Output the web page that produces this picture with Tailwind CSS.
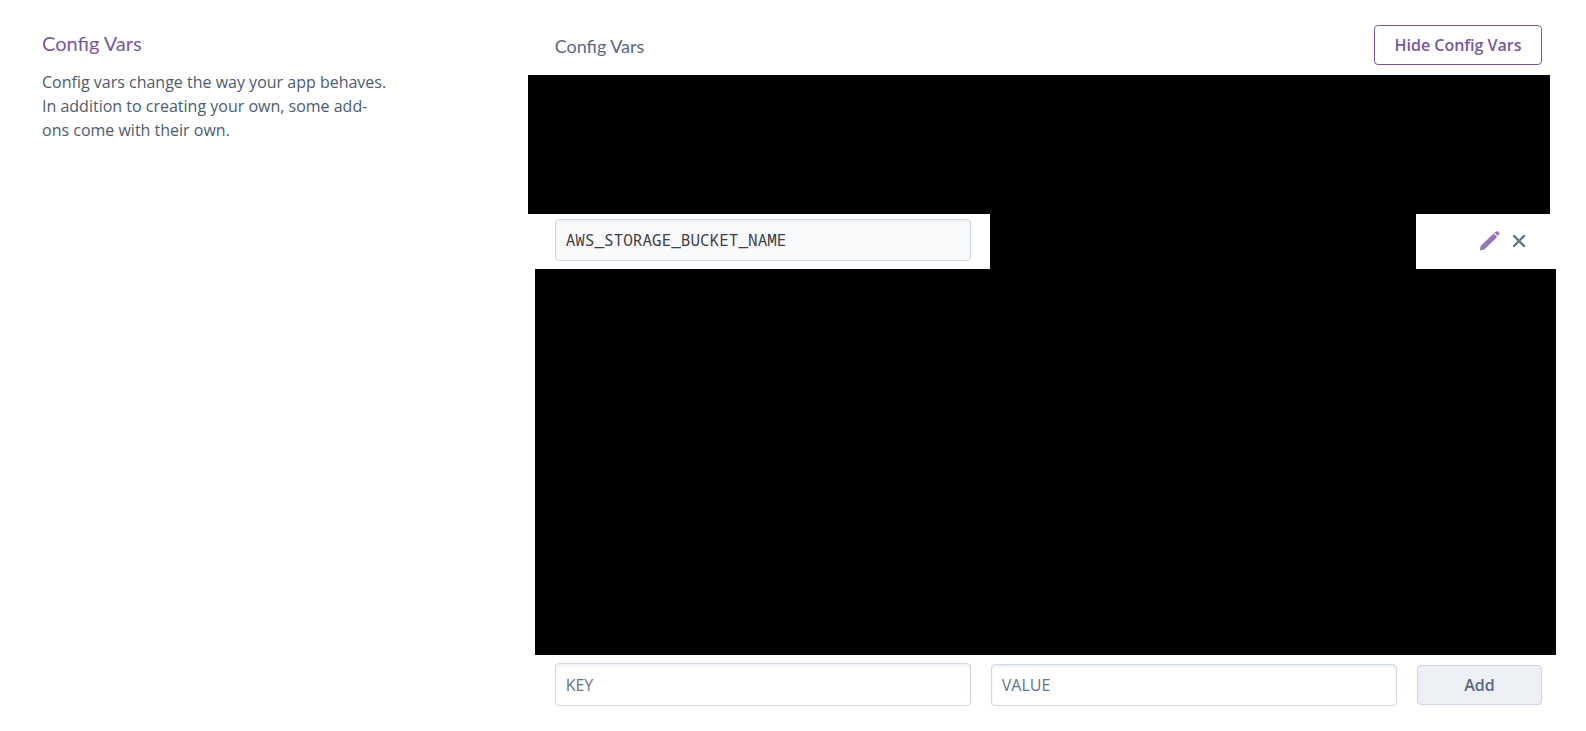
<!DOCTYPE html>
<html lang="en">
<head>
<meta charset="utf-8">
<meta name="viewport" content="width=device-width, initial-scale=1">
<title>Config Vars</title>
<script src="https://cdn.jsdelivr.net/npm/@tailwindcss/browser@4"></script>
</head>
<body class="bg-white font-['Open_Sans',sans-serif] text-base text-[#475569]">
<main class="flex">
  <aside class="w-1/3 shrink-0 pl-[42px] pr-[138px] pt-[31px]">
    <h2 class="font-['Lato',sans-serif] text-xl leading-6 text-[#79589f]">Config Vars</h2>
    <p class="mt-[15px] leading-6 text-[#4d5b6e]">Config vars change the way your app behaves. In addition to creating your own, some add-<wbr>ons come with their own.</p>
  </aside>
  <section class="min-w-0 flex-1">
    <header class="flex h-[75px] items-start justify-between pl-[26px] pr-11 pt-[25px]">
      <h3 class="pt-[9px] font-['Lato',sans-serif] text-lg leading-6 text-[#596981]">Config Vars</h3>
      <button type="button" class="h-10 w-[168px] rounded border border-[#79589f] bg-white font-semibold text-[#79589f]">Hide Config Vars</button>
    </header>
    <div class="-ml-px mr-9 h-[139px] bg-black"></div>
    <div class="grid h-[55px] grid-cols-[416fr_406fr_125px] gap-5 pl-[26px] pr-11">
      <input type="text" readonly aria-label="Config var key" value="AWS_STORAGE_BUCKET_NAME" class="mt-[5px] h-[42px] min-w-0 rounded border border-[#cfd7e6] bg-[#f9fafc] px-[10px] font-['Noto_Sans_Mono','DejaVu_Sans_Mono',monospace] text-[#3f3f44] shadow-[inset_0_2px_3px_#eef0f7]">
      <div class="-ml-px -mr-[19px] bg-black"></div>
      <div class="flex items-center justify-end gap-1 pb-[2px] pr-[11px]">
        <button type="button" aria-label="Edit" class="size-6">
          <svg viewBox="0 0 24 24" class="size-6" fill="#9476b8"><path d="M.7 21.6l1-4.8L14.7 4.6l3.5 3.5L5.3 20.4z"/><path d="M15.5 3.8l1.3-1.2q1.5-1 2.9.3 1.3 1.4.3 2.9l-1.2 1.3z"/></svg>
        </button>
        <button type="button" aria-label="Remove" class="size-6">
          <svg viewBox="0 0 24 24" class="size-6" fill="none" stroke="#62738d" stroke-width="2.4" stroke-linecap="round"><path d="M7 7l10 10M17 7L7 17"/></svg>
        </button>
      </div>
    </div>
    <div class="ml-[6px] mr-[30px] h-[386px] bg-black"></div>
    <form class="grid grid-cols-[416fr_406fr_125px] items-center gap-5 pb-6 pl-[26px] pr-11 pt-2">
      <input type="text" aria-label="Key" placeholder="KEY" class="h-[43px] min-w-0 rounded border border-[#cfd7e6] bg-white px-[10px] shadow-[inset_0_2px_3px_#eef0f7] placeholder:text-[#62738d]">
      <input type="text" aria-label="Value" placeholder="VALUE" class="h-[42px] min-w-0 rounded border border-[#cfd7e6] bg-white px-[10px] shadow-[inset_0_2px_3px_#eef0f7] placeholder:text-[#62738d]">
      <button type="button" class="h-10 rounded border border-[#cfd7e6] bg-[#edf0f5] font-semibold text-[#596981]">Add</button>
    </form>
  </section>
</main>
</body>
</html>
